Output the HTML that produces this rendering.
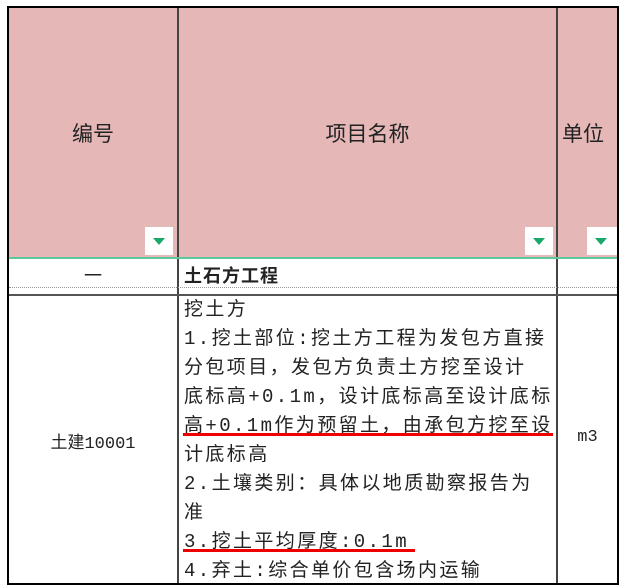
<!DOCTYPE html>
<html><head><meta charset="utf-8"><style>
body{margin:0;width:621px;height:585px;background:#fff;position:relative;overflow:hidden;font-family:"Liberation Sans","Noto Sans CJK SC","WenQuanYi Zen Hei",sans-serif;color:#222}
.a{position:absolute}
.hdr{left:9px;top:8px;width:608px;height:250px;background:#e5b7b7}
.btn{position:absolute;width:28px;height:28px;background:#fff;top:227px}
.btn:after{content:"";position:absolute;left:8px;top:11px;border-left:6px solid transparent;border-right:6px solid transparent;border-top:7px solid #1aa86a}
.t{font-family:"Liberation Mono","Noto Sans CJK SC",monospace;font-size:19px;line-height:29px;letter-spacing:2.4px;white-space:nowrap}
</style></head><body>
<div class="a hdr"></div>
<div class="a" style="left:7px;top:6px;width:608px;height:575px;border:2px solid #000"></div>
<div class="a" style="left:177px;top:8px;width:2px;height:575px;background:#444"></div>
<div class="a" style="left:556px;top:8px;width:2px;height:575px;background:#444"></div>
<div class="a" style="left:9px;top:257px;width:608px;height:2px;background:#5cc79a"></div>
<div class="a" style="left:9px;top:287px;width:608px;border-top:1px dotted #999"></div>
<div class="a" style="left:9px;top:294px;width:608px;height:2px;background:#555"></div>
<div class="btn" style="left:145px"></div>
<div class="btn" style="left:525px"></div>
<div class="btn" style="left:587px;width:30px"></div>
<div class="a" style="left:9px;top:118px;width:168px;text-align:center;font-size:21px">编号</div>
<div class="a" style="left:179px;top:118px;width:377px;text-align:center;font-size:21px">项目名称</div>
<div class="a" style="left:562px;top:118px;font-size:21px">单位</div>
<div class="a" style="left:9px;top:262px;width:168px;text-align:center;font-size:18px">一</div>
<div class="a" style="left:184px;top:262px;font-size:18px;font-weight:bold;letter-spacing:1px">土石方工程</div>
<div class="a" style="left:9px;top:428px;width:168px;text-align:center;font-size:17px;font-family:'Liberation Mono','Noto Sans CJK SC',monospace">土建10001</div>
<div class="a" style="left:558px;top:428px;width:59px;text-align:center;font-size:17px;font-family:'Liberation Mono',monospace">m3</div>
<div class="a t" style="left:184px;top:296px">挖土方<br>1.挖土部位:挖土方工程为发包方直接<br>分包项目，发包方负责土方挖至设计<br>底标高+0.1m，设计底标高至设计底标<br>高+0.1m作为预留土，由承包方挖至设<br>计底标高<br>2.土壤类别：具体以地质勘察报告为<br>准<br>3.挖土平均厚度:0.1m<br>4.弃土:综合单价包含场内运输</div>
<div class="a" style="left:183px;top:433px;width:370px;height:3px;background:#e00"></div>
<div class="a" style="left:183px;top:549px;width:232px;height:3px;background:#e00"></div>
</body></html>
